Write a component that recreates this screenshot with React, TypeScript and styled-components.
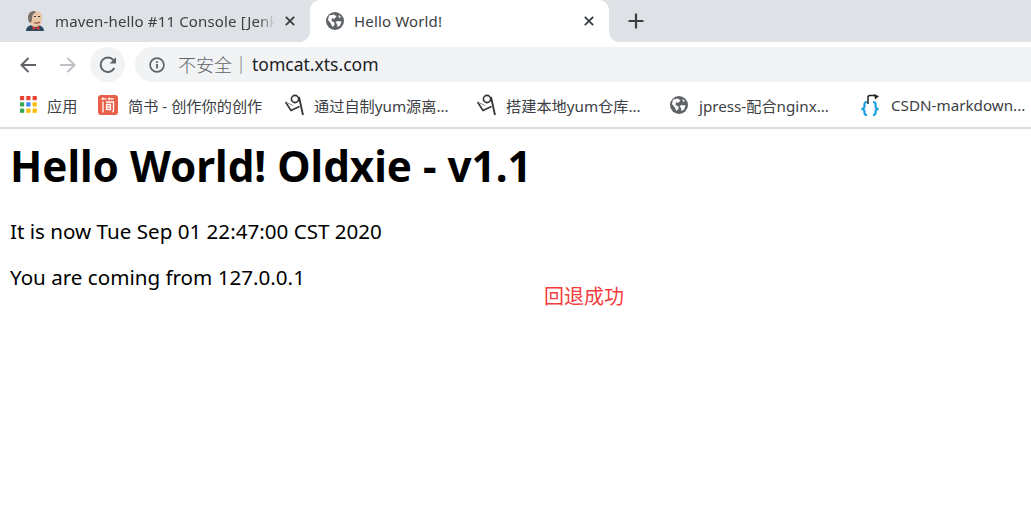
import React from "react";
import styled, { createGlobalStyle, css } from "styled-components";

const Global = createGlobalStyle`
  html, body { margin: 0; padding: 0; background: #fff; }
  body { font-family: "Noto Sans", "Noto Sans CJK SC", sans-serif; overflow: hidden; }
`;
const Page = styled.div`
  position: relative;
  width: 1031px;
  height: 508px;
  overflow: hidden;
  background: #fff;
`;
const TabStrip = styled.div`
  display: flex;
  height: 42px;
  background: #dee1e6;
  align-items: stretch;
`;
const activeTab = css`
  background: #fff;
  border-radius: 10px 10px 0 0;
  &::before, &::after {
    content: "";
    position: absolute;
    bottom: 0;
    width: 10px;
    height: 10px;
  }
  &::before {
    left: -10px;
    background: radial-gradient(circle at 0 0, transparent 9.5px, #fff 10px);
  }
  &::after {
    right: -10px;
    background: radial-gradient(circle at 100% 0, transparent 9.5px, #fff 10px);
  }
`;
const Tab = styled.div<{ $active?: boolean; $w: number }>`
  position: relative;
  display: flex;
  align-items: center;
  width: ${(p) => p.$w}px;
  box-sizing: border-box;
  padding: 0 15px 0 ${(p) => (p.$active ? 16 : 25)}px;
  gap: 10px;
  flex: none;
  ${(p) => p.$active && activeTab}
`;
const TabTitle = styled.span<{ $fade?: boolean }>`
  flex: 1;
  min-width: 0;
  font-size: 15px;
  line-height: 20px;
  color: #3c4043;
  white-space: nowrap;
  overflow: hidden;
  letter-spacing: 0.15px;
  ${(p) => p.$fade && css`
    mask-image: linear-gradient(to right, #000 calc(100% - 16px), transparent);
  `}
`;
const NewTab = styled.div`
  display: flex;
  align-items: center;
  padding-left: 19px;
  color: #3c4043;
`;
const Toolbar = styled.div`
  display: flex;
  align-items: center;
  height: 45px;
  background: #fff;
  padding-left: 10px;
`;
const NavBtn = styled.div<{ $hover?: boolean }>`
  display: flex;
  align-items: center;
  justify-content: center;
  width: 35px;
  height: 35px;
  margin-right: ${(p) => (p.$hover ? 10 : 5)}px;
  border-radius: 50%;
  background: ${(p) => (p.$hover ? "#f1f3f4" : "transparent")};
  flex: none;
`;
const Omnibox = styled.div`
  display: flex;
  align-items: center;
  flex: 1;
  height: 35px;
  margin-right: -20px;
  padding-left: 14px;
  border-radius: 18px;
  background: #f1f3f4;
`;
const Insecure = styled.span`
  margin: -2px 0 0 13px;
  font-size: 18px;
  color: #5f6368;
  white-space: nowrap;
  font-weight: 300;
`;
const Host = styled.span`
  margin: -2px 0 0 2px;
  font-size: 17.5px;
  color: #202124;
  white-space: nowrap;
`;
const Bookmarks = styled.div`
  display: flex;
  align-items: center;
  height: 40px;
  box-sizing: content-box;
  background: #fff;
  border-bottom: 2px solid #dcdcdf;
  overflow: hidden;
  padding-left: 20px;
  & > * { margin-top: -5px; }
`;
const Bookmark = styled.div<{ $w: number; $gap?: number }>`
  display: flex;
  align-items: center;
  gap: ${(p) => p.$gap ?? 10}px;
  width: ${(p) => p.$w}px;
  flex: none;
`;
const BookmarkLabel = styled.span`
  font-size: 15.2px;
  color: #3c4043;
  white-space: nowrap;
`;
const Content = styled.main`
  padding: 8px 10px;
  color: #000;
`;
const Heading = styled.h1`
  margin: 1px 0 5px;
  font-size: 42.2px;
  line-height: 56px;
  font-weight: 700;
  white-space: nowrap;
`;
const Para = styled.p`
  margin: 0;
  font-size: 20.6px;
  line-height: 28px;
  white-space: nowrap;
  padding-top: 18px;
`;
const Annotation = styled.div`
  position: absolute;
  left: 544px;
  top: 283px;
  font-size: 20px;
  line-height: 28px;
  color: #f53d3d;
`;
const GlobeIcon = () => (
  <svg width="18" height="18" viewBox="0 0 18 18" style={{ flex: "none" }}>
    <circle cx="9" cy="9" r="9" fill="#5f6368" />
    <path d="M3 3.5 L8 2.5 L10.5 4.5 L8 7 L6 6 L5.5 9 L8.5 10.5 L8.5 13 L6.5 15 L4.5 11 L2 8 Z" fill="#fff" />
    <path d="M11 9 L15.5 9.5 L14 13.5 L11.5 15 L11 12 L9.8 10.5 Z" fill="#fff" />
    <path d="M12.5 2.8 L15 5 L13 6 Z" fill="#fff" />
  </svg>
);
const JenkinsIcon = () => (
  <svg width="20" height="22" viewBox="0 0 20 22" style={{ flex: "none" }}>
    <path d="M1 21 C1 17 4 15.5 7 15 L14 15 C17 16 19 18 19 21 Z" fill="#2f4a60" />
    <path d="M4 9 C3 3 7 1 11 1 C15 1 18 4 17 9 C17 14 14 17 10 17 C7 17 4.5 14 4 9 Z" fill="#e9c6a8" />
    <path d="M4 12 C1.5 6 4 1.5 9 1 C11 1 11 3 9 3.5 C7.5 4 7 7 7 9 C7 11 6 14 4 12 Z" fill="#77706a" />
    <path d="M9 6.5 h2 M13 6.5 h2" stroke="#333" strokeWidth="1" />
    <path d="M9 12.5 q3 1.5 6 -0.5" stroke="#8a4a3a" strokeWidth="1.2" fill="none" />
    <path d="M7.5 16 L11 18 L14.5 16 L14.5 20 L11 18.5 L7.5 20 Z" fill="#d33833" />
  </svg>
);
const CloseIcon = () => (
  <svg width="10" height="10" viewBox="0 0 10 10" style={{ flex: "none" }}>
    <path d="M0.8 0.8 L9.2 9.2 M9.2 0.8 L0.8 9.2" stroke="#3c4043" strokeWidth="1.9" />
  </svg>
);
const PlusIcon = () => (
  <svg width="16" height="16" viewBox="0 0 16 16">
    <path d="M8 0.5 V15.5 M0.5 8 H15.5" stroke="#3c4043" strokeWidth="2.2" />
  </svg>
);
const ArrowIcon = ({ dir, color }: { dir: "l" | "r"; color: string }) => (
  <svg width="18" height="18" viewBox="0 0 18 18" style={dir === "r" ? { transform: "scaleX(-1)" } : undefined}>
    <path d="M17 9 H2.5 M9.5 2 L2.5 9 L9.5 16" stroke={color} strokeWidth="2" fill="none" />
  </svg>
);
const ReloadIcon = () => (
  <svg width="20" height="20" viewBox="0 0 20 20">
    <path d="M16.3 13 A7.2 7.2 0 1 1 15.4 5.2" stroke="#5f6368" strokeWidth="2" fill="none" />
    <path d="M18 2.2 V8.6 H11.6 Z" fill="#5f6368" />
  </svg>
);
const InfoIcon = () => (
  <svg width="16" height="16" viewBox="0 0 16 16" style={{ flex: "none" }}>
    <circle cx="8" cy="8" r="6.9" stroke="#5f6368" strokeWidth="1.7" fill="none" />
    <rect x="7.1" y="7" width="1.8" height="4.5" fill="#5f6368" />
    <rect x="7.1" y="4.2" width="1.8" height="1.8" fill="#5f6368" />
  </svg>
);
const AppsIcon = () => {
  const colors = ["#ea4335", "#ea4335", "#ea4335", "#34a853", "#4285f4", "#fbbc04", "#34a853", "#fbbc04", "#fbbc04"];
  return (
    <svg width="17" height="17" viewBox="0 0 17 17" style={{ flex: "none" }}>
      {colors.map((c, i) => (
        <rect key={i} x={(i % 3) * 6.3} y={Math.floor(i / 3) * 6.3} width="4.2" height="4.2" fill={c} />
      ))}
    </svg>
  );
};
const JianshuIcon = () => (
  <svg width="20" height="20" viewBox="0 0 20 20" style={{ flex: "none" }}>
    <rect width="20" height="20" rx="3" fill="#e8604a" />
    <path d="M5 2.5 L4 5 M11.5 2.5 L10.5 5 M4.5 3.8 H8.5 M11 3.8 H16 M5 6.5 V17.5 M8 7 H15.5 V16 L14 17 M8.5 9.5 H12.5 V14.5 H8.5 Z M8.5 12 H12.5" stroke="#fff" strokeWidth="1.3" fill="none" />
  </svg>
);
const YumIcon = () => (
  <svg width="19" height="22" viewBox="0 0 19 22" style={{ flex: "none" }}>
    <circle cx="10" cy="5" r="3.6" stroke="#333" strokeWidth="1.6" fill="none" />
    <path d="M14 3 L18 21" stroke="#333" strokeWidth="1.8" fill="none" />
    <path d="M0.5 8 L6 16.5 L14.5 12.5" stroke="#333" strokeWidth="1.6" fill="none" />
    <path d="M0.5 8 L8 11.5" stroke="#888" strokeWidth="1" fill="none" />
  </svg>
);
const CodeIcon = () => (
  <svg width="20" height="22" viewBox="0 0 20 22" style={{ flex: "none" }}>
    <path d="M8 10 V3 Q8 1.5 10 1.5 H15" stroke="#222" strokeWidth="1.5" fill="none" />
    <path d="M14 0 L19 2.2 L15 5.5 Z" fill="#222" />
    <path d="M7 8 Q4.5 8 4.5 10 V12.5 Q4.5 14.5 1.5 15 Q4.5 15.5 4.5 17.5 V19 Q4.5 21 7 21" stroke="#1a9fe0" strokeWidth="2.2" fill="none" />
    <path d="M13 8 Q15.5 8 15.5 10 V12.5 Q15.5 14.5 18.5 15 Q15.5 15.5 15.5 17.5 V19 Q15.5 21 13 21" stroke="#1a9fe0" strokeWidth="2.2" fill="none" />
  </svg>
);

export default function App() {
  return (
    <Page>
      <Global />
      <TabStrip>
        <Tab $w={310}>
          <JenkinsIcon />
          <TabTitle $fade>maven-hello #11 Console [Jenkins]</TabTitle>
          <CloseIcon />
        </Tab>
        <Tab $active $w={299}>
          <GlobeIcon />
          <TabTitle>Hello World!</TabTitle>
          <CloseIcon />
        </Tab>
        <NewTab>
          <PlusIcon />
        </NewTab>
      </TabStrip>
      <Toolbar>
        <NavBtn><ArrowIcon dir="l" color="#5f6368" /></NavBtn>
        <NavBtn><ArrowIcon dir="r" color="#bdc1c6" /></NavBtn>
        <NavBtn $hover><ReloadIcon /></NavBtn>
        <Omnibox>
          <InfoIcon />
          <Insecure>不安全｜</Insecure>
          <Host>tomcat.xts.com</Host>
        </Omnibox>
      </Toolbar>
      <Bookmarks>
        <Bookmark $w={78}><AppsIcon /><BookmarkLabel>应用</BookmarkLabel></Bookmark>
        <Bookmark $w={187}><JianshuIcon /><BookmarkLabel>简书 - 创作你的创作</BookmarkLabel></Bookmark>
        <Bookmark $w={192}><YumIcon /><BookmarkLabel>通过自制yum源离...</BookmarkLabel></Bookmark>
        <Bookmark $w={193}><YumIcon /><BookmarkLabel>搭建本地yum仓库...</BookmarkLabel></Bookmark>
        <Bookmark $w={190} $gap={11}><GlobeIcon /><BookmarkLabel>jpress-配合nginx...</BookmarkLabel></Bookmark>
        <Bookmark $w={171} $gap={11}><CodeIcon /><BookmarkLabel>CSDN-markdown...</BookmarkLabel></Bookmark>
      </Bookmarks>
      <Content>
        <Heading>Hello World! Oldxie - v1.1</Heading>
        <Para>It is now Tue Sep 01 22:47:00 CST 2020</Para>
        <Para>You are coming from 127.0.0.1</Para>
      </Content>
      <Annotation>回退成功</Annotation>
    </Page>
  );
}
